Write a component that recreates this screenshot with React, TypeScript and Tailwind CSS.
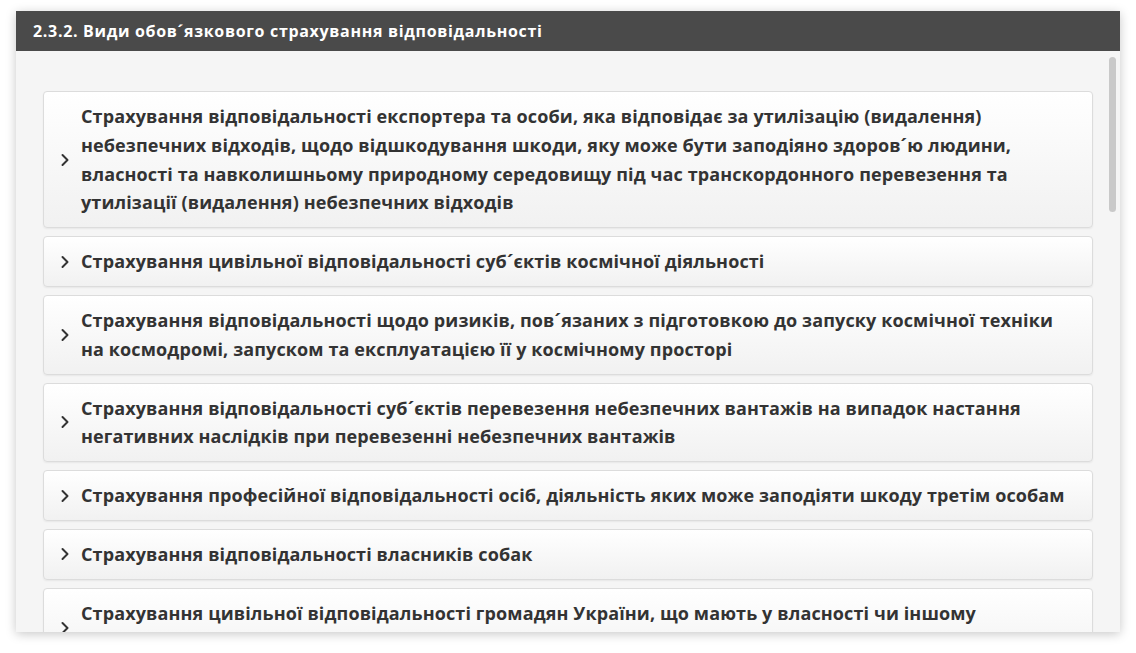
import { ChevronRight } from "lucide-react";

const items = [
  "Страхування відповідальності експортера та особи, яка відповідає за утилізацію (видалення) небезпечних відходів, щодо відшкодування шкоди, яку може бути заподіяно здоров´ю людини, власності та навколишньому природному середовищу під час транскордонного перевезення та утилізації (видалення) небезпечних відходів",
  "Страхування цивільної відповідальності суб´єктів космічної діяльності",
  "Страхування відповідальності щодо ризиків, пов´язаних з підготовкою до запуску космічної техніки на космодромі, запуском та експлуатацією її у космічному просторі",
  "Страхування відповідальності суб´єктів перевезення небезпечних вантажів на випадок настання негативних наслідків при перевезенні небезпечних вантажів",
  "Страхування професійної відповідальності осіб, діяльність яких може заподіяти шкоду третім особам",
  "Страхування відповідальності власників собак",
  "Страхування цивільної відповідальності громадян України, що мають у власності чи іншому законному володінні зброю",
];

export default function App() {
  return (
    <div
      className="h-[653px] w-[1136px] overflow-hidden bg-white pl-4 pr-4 pt-[11px]"
      style={{ fontFamily: '"Open Sans", "Noto Sans", sans-serif' }}
    >
      <div className="flex h-[621px] flex-col overflow-hidden bg-[#f5f5f5] shadow-[0_2px_10px_rgba(0,0,0,0.22)]">
        <div className="flex h-10 shrink-0 items-center bg-[#4a4a4a] pl-[17px] text-[16px] font-bold tracking-[0.68px] text-white">
          2.3.2. Види обов´язкового страхування відповідальності
        </div>
        <div className="relative min-h-0 flex-1 overflow-hidden">
          <div className="flex flex-col gap-2 px-[27px] pt-10">
            {items.map((t, i) => (
              <div
                key={i}
                className="flex items-center rounded-[4px] border border-[#dcdcdc] bg-gradient-to-b from-white to-[#f1f1f1] py-[10px] pl-[11px] pr-[14px] shadow-[0_1px_2px_rgba(0,0,0,0.06)]"
              >
                <ChevronRight size={20} strokeWidth={2.4} className="mr-[6px] shrink-0 text-[#333]" />
                <span className="text-[18px] font-bold leading-[1.6] tracking-[0.12px] text-[#333]">{t}</span>
              </div>
            ))}
          </div>
          <div className="absolute right-[4px] top-[6px] h-[155px] w-[7px] rounded-full bg-[#c9c9c9]" />
        </div>
      </div>
    </div>
  );
}
